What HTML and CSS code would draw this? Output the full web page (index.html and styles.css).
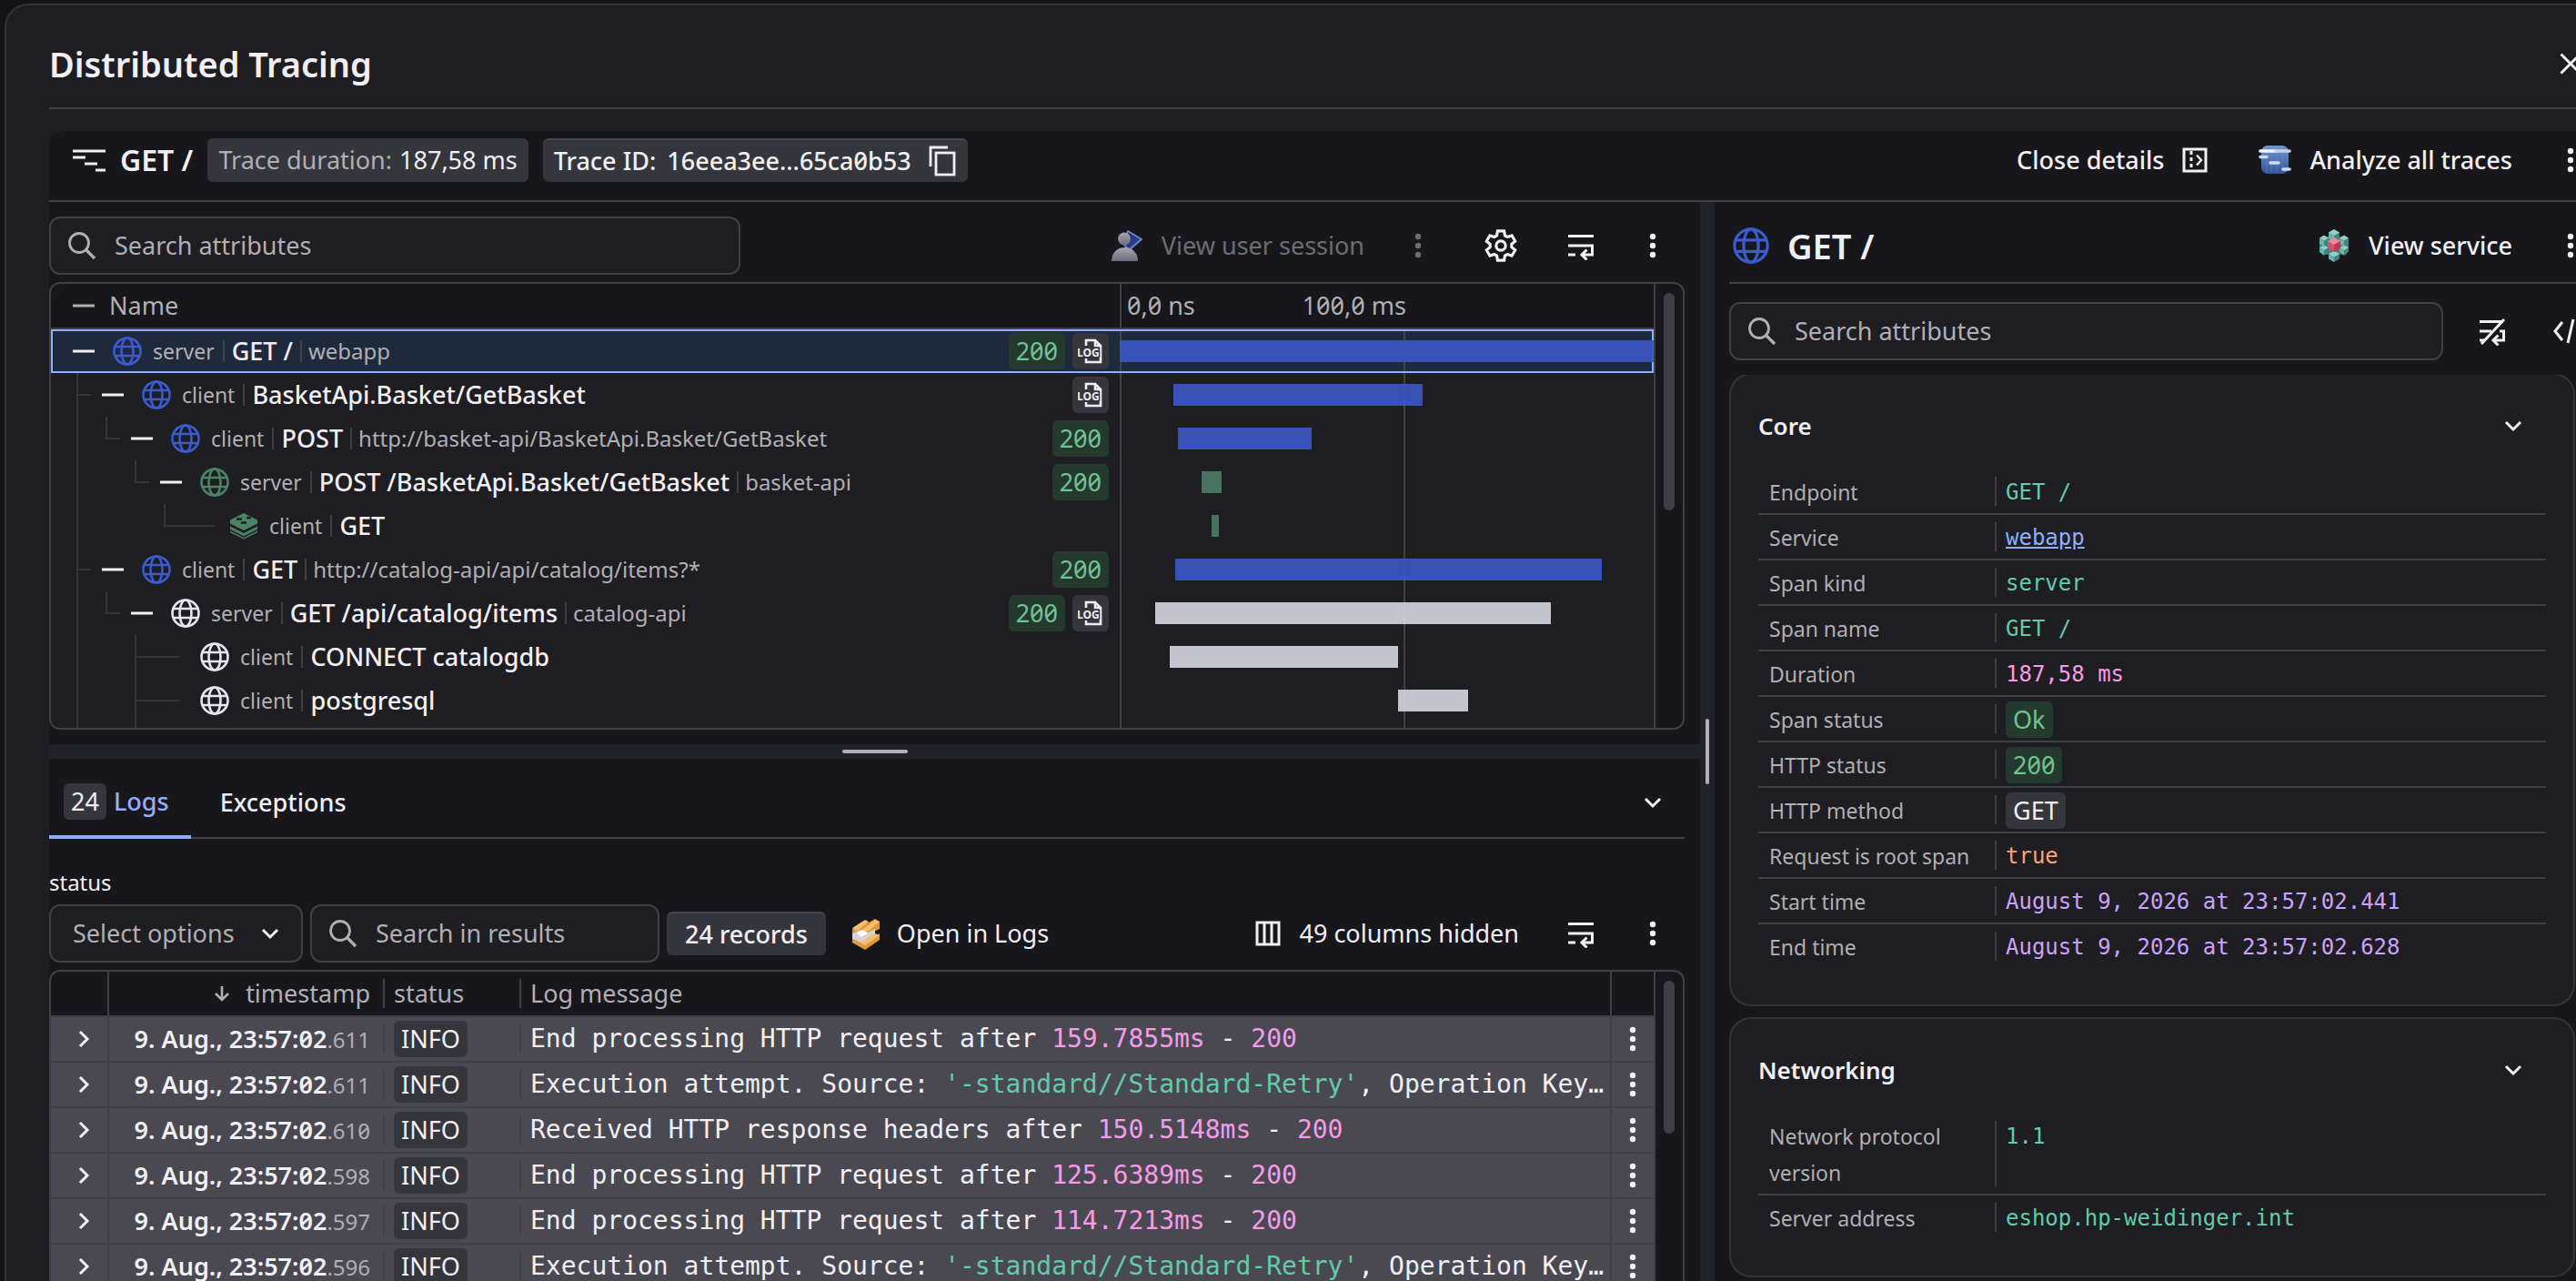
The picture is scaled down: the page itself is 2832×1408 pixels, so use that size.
FILE: index.html
```html
<!DOCTYPE html>
<html lang="en">
<head>
  <meta charset="UTF-8" />
  <meta name="viewport" content="width=device-width, initial-scale=1" />
  <title>Distributed Tracing</title>
  <link rel="stylesheet" href="styles.css">
</head>
<body>

  <!-- Icon sprite -->
  <svg class="sprite" aria-hidden="true">
    <symbol id="i-search" viewBox="0 0 32 32"><circle cx="13" cy="13" r="10.5" fill="none" stroke="currentColor" stroke-width="2.8"/><path d="M20.5 20.5L30 30" stroke="currentColor" stroke-width="3.2"/></symbol>
    <symbol id="i-kebab" viewBox="0 0 32 32"><circle cx="16" cy="6" r="3.2" fill="currentColor"/><circle cx="16" cy="16" r="3.2" fill="currentColor"/><circle cx="16" cy="26" r="3.2" fill="currentColor"/></symbol>
    <symbol id="i-globe" viewBox="0 0 32 32"><g fill="none" stroke="currentColor" stroke-width="2.6"><circle cx="16" cy="16" r="14.5"/><ellipse cx="16" cy="16" rx="6.5" ry="14.5"/><path d="M2.5 11h27M2.5 21h27"/></g></symbol>
    <symbol id="i-minus" viewBox="0 0 24 24"><path d="M0 12h24" stroke="currentColor" stroke-width="3"/></symbol>
    <symbol id="i-down" viewBox="0 0 20 20"><path d="M2 6l8 8 8-8" fill="none" stroke="currentColor" stroke-width="3"/></symbol>
    <symbol id="i-right" viewBox="0 0 20 20"><path d="M6 2l8 8-8 8" fill="none" stroke="currentColor" stroke-width="3"/></symbol>
    <symbol id="i-wrap" viewBox="0 0 32 32"><g fill="none" stroke="currentColor" stroke-width="3"><path d="M2 5.5h28M2 16h26.5v10H18M2 26h8"/><path d="M22.500 20.500L17 26l5.500 5.500"/></g></symbol>
    <symbol id="i-nowrap" viewBox="0 0 32 32"><g fill="none" stroke="currentColor" stroke-width="3"><path d="M2 5.500h26M2 16h13M24 16h4.500v10H18M2 26h5"/><path d="M22.500 20.500L17 26l5.500 5.500"/><path d="M29 3L4 30"/></g></symbol>
    <symbol id="i-code" viewBox="0 0 40 32"><path d="M11 6L3 16l8 10M23 3l-6 26M29 6l8 10-8 10" fill="none" stroke="currentColor" stroke-width="3"/></symbol>
    <symbol id="i-gear" viewBox="-16 -16 32 32"><g fill="none" stroke="currentColor" stroke-width="2.800"><path d="M-4-9.800L-3.200-14.300H3.200L4-9.800 6.490-8.360 10.780-9.920 13.980-4.380 10.490-1.440V1.440L13.980 4.380 10.780 9.920 6.490 8.360 4 9.800 3.200 14.300H-3.200L-4 9.800-6.490 8.360-10.780 9.920-13.980 4.380-10.490 1.440V-1.440L-13.980-4.380-10.780-9.920-6.490-8.360Z"/><circle r="4.600"/></g></symbol>
    <symbol id="i-log" viewBox="0 0 28 28"><path d="M9 8V2h10l6 6v18H9v-4M19 2v6h6" fill="none" stroke="currentColor" stroke-width="2.600"/><text x="-1" y="20" font-size="12" font-weight="700" fill="currentColor" stroke="#35363b" stroke-width="3" paint-order="stroke">LOG</text></symbol>
    <symbol id="i-redis" viewBox="0 0 32 28"><path d="M16 0l15 7.500v4L16 19 1 11.500v-4z" fill="currentColor"/><path d="M1 14.500L16 22l15-7.500v3.200L16 25.200 1 17.700z" fill="currentColor"/><path d="M1 19.600L16 27l15-7.400v1.700L16 28.500 1 21.300z" fill="currentColor"/><path d="M8 6.500h6M19 5h5M13 10.500h6" stroke="#1e1d22" stroke-width="2.400"/></symbol>
    <symbol id="i-copy" viewBox="0 0 32 36"><g fill="none" stroke="currentColor" stroke-width="2.800"><rect x="9" y="9" width="20" height="24"/><path d="M3 24V3h19"/></g></symbol>
    <symbol id="i-columns" viewBox="0 0 28 28"><path d="M2 2h24v24H2zM10 2v24M18 2v24" fill="none" stroke="currentColor" stroke-width="3"/></symbol>
    <symbol id="i-panel" viewBox="0 0 28 28"><g fill="none" stroke="currentColor"><path d="M2 2h24v24H2z" stroke-width="3"/><path d="M10 4v20" stroke-width="3" stroke-dasharray="4 3"/><path d="M16 8.500l5 5.500-5 5.500" stroke-width="2.400"/></g></symbol>
    <symbol id="i-trace" viewBox="0 0 36 26"><path d="M0 3h36M0 10h14M13 17h14M25 24h11" stroke="currentColor" stroke-width="3.200"/></symbol>
    <symbol id="i-close" viewBox="0 0 24 24"><path d="M1.500 1.500l21 21M22.500 1.500l-21 21" stroke="currentColor" stroke-width="3"/></symbol>
    <symbol id="i-sort" viewBox="0 0 20 20"><path d="M10 2v15M3 10l7 7 7-7" fill="none" stroke="currentColor" stroke-width="2.600"/></symbol>
    <linearGradient id="g-blue" x2="0" y2="1"><stop offset="0" stop-color="#6f97c9"/><stop offset="1" stop-color="#38539a"/></linearGradient>
    <linearGradient id="g-grey" x2="0" y2="1"><stop offset="0" stop-color="#a6a6ae"/><stop offset="1" stop-color="#6c6e80"/></linearGradient>
    <linearGradient id="g-diamond" x2="1" y2="1"><stop offset="0" stop-color="#141f66"/><stop offset="1" stop-color="#3a55a8"/></linearGradient>
  </svg>

  <main class="modal">
    <header class="modal-header">
      <h1>Distributed Tracing</h1>
      <button class="close" aria-label="Close"><svg><use href="#i-close"/></svg></button>
    </header>

    <section class="trace">
      <div class="trace-bar">
        <svg class="trace-icon"><use href="#i-trace"/></svg>
        <h2>GET /</h2>
        <div class="chip"><span class="muted">Trace duration:</span> 187,58 ms</div>
        <button class="chip chip-btn"><span>Trace ID:</span> <span>16eea3ee…65ca0b53</span><svg class="copy"><use href="#i-copy"/></svg></button>
        <div class="actions">
          <button class="action strong">Close details <svg class="i28"><use href="#i-panel"/></svg></button>
          <button class="action strong">
            <svg class="app" viewBox="0 0 36 36"><rect x="3" y="2" width="30" height="31" rx="7" fill="url(#g-blue)"/><path d="M9 3v29M14 3v29M20 3v29M26 3v29" stroke="#7fa3d2" stroke-opacity=".3"/><g stroke-linecap="round" stroke-width="3.600"><path d="M2 8h17" stroke="#f4f7fb"/><path d="M19 8h15" stroke="#c4d3e5"/><path d="M2 14.500h7M13 21h9M27 28h7" stroke="#c9dcf0"/></g></svg>
            Analyze all traces
          </button>
          <button class="icon-btn" aria-label="More trace actions"><svg><use href="#i-kebab"/></svg></button>
        </div>
      </div>

      <div class="panes">
        <div class="left">
          <section class="tree-pane">
            <div class="toolbar">
              <label class="search search-main"><svg><use href="#i-search"/></svg><input type="text" placeholder="Search attributes" aria-label="Search span attributes"></label>
              <div class="actions">
                <button class="action session" disabled>
                  <svg class="app" viewBox="0 0 36 36"><path d="M19 2l15 9-14 12-6-7z" fill="url(#g-diamond)" stroke="#6686c4" stroke-width="2" stroke-linejoin="round"/><circle cx="15" cy="10.500" r="7" fill="url(#g-grey)"/><path d="M1 35c0-9 6-15 14.500-15S30 26 30 35z" fill="url(#g-grey)"/></svg>
                  View user session
                </button>
                <button class="icon-btn menu spaced" disabled aria-label="Session actions"><svg><use href="#i-kebab"/></svg></button>
                <button class="icon-btn spaced" aria-label="Settings"><svg class="gear"><use href="#i-gear"/></svg></button>
                <button class="icon-btn" aria-label="Wrap lines"><svg><use href="#i-wrap"/></svg></button>
                <button class="icon-btn menu" aria-label="More span actions"><svg><use href="#i-kebab"/></svg></button>
              </div>
            </div>

            <div class="table-box tree-box">
              <div class="table-scroll">
              <table class="tree">
                <thead>
                  <tr>
                    <th class="name-col"><div class="cell"><button class="toggle" aria-label="Collapse all"><svg><use href="#i-minus"/></svg></button>Name</div></th>
                    <th class="time-col"><div class="ticks"><span>0,0 ns</span><span class="tick-mid">100,0 ms</span></div></th>
                  </tr>
                </thead>
                <tbody>
                  <tr class="selected">
                    <td><div class="cell"><button class="toggle" aria-label="Collapse"><svg><use href="#i-minus"/></svg></button><svg class="kind-icon blue"><use href="#i-globe"/></svg><span class="kind">server</span><span class="span-name">GET /</span><span class="service">webapp</span><span class="badges"><span class="badge ok">200</span><span class="badge log"><svg><use href="#i-log"/></svg></span></span></div></td>
                    <td class="time"><div class="bar bar-blue" style="margin-left:0;width:100%"></div></td>
                  </tr>
                  <tr>
                    <td><div class="cell"><i class="guide line tick"></i><button class="toggle" aria-label="Collapse"><svg><use href="#i-minus"/></svg></button><svg class="kind-icon blue"><use href="#i-globe"/></svg><span class="kind">client</span><span class="span-name">BasketApi.Basket/GetBasket</span><span class="badges"><span class="badge log"><svg><use href="#i-log"/></svg></span></span></div></td>
                    <td class="time"><div class="bar bar-blue" style="margin-left:10%;width:46.7%"></div></td>
                  </tr>
                  <tr>
                    <td><div class="cell"><i class="guide line"></i><i class="guide end"></i><button class="toggle" aria-label="Collapse"><svg><use href="#i-minus"/></svg></button><svg class="kind-icon blue"><use href="#i-globe"/></svg><span class="kind">client</span><span class="span-name">POST</span><span class="service">http://basket-api/BasketApi.Basket/GetBasket</span><span class="badges"><span class="badge ok">200</span></span></div></td>
                    <td class="time"><div class="bar bar-blue" style="margin-left:10.9%;width:25%"></div></td>
                  </tr>
                  <tr>
                    <td><div class="cell"><i class="guide line"></i><i class="guide"></i><i class="guide end"></i><button class="toggle" aria-label="Collapse"><svg><use href="#i-minus"/></svg></button><svg class="kind-icon green"><use href="#i-globe"/></svg><span class="kind">server</span><span class="span-name">POST /BasketApi.Basket/GetBasket</span><span class="service">basket-api</span><span class="badges"><span class="badge ok">200</span></span></div></td>
                    <td class="time"><div class="bar bar-green" style="margin-left:15.3%;width:3.7%"></div></td>
                  </tr>
                  <tr>
                    <td><div class="cell"><i class="guide line"></i><i class="guide"></i><i class="guide"></i><i class="guide end leaf"></i><svg class="kind-icon green"><use href="#i-redis"/></svg><span class="kind">client</span><span class="span-name">GET</span></div></td>
                    <td class="time"><div class="bar bar-green" style="margin-left:17.2%;width:1.3%"></div></td>
                  </tr>
                  <tr>
                    <td><div class="cell"><i class="guide line tick"></i><button class="toggle" aria-label="Collapse"><svg><use href="#i-minus"/></svg></button><svg class="kind-icon blue"><use href="#i-globe"/></svg><span class="kind">client</span><span class="span-name">GET</span><span class="service">http://catalog-api/api/catalog/items?*</span><span class="badges"><span class="badge ok">200</span></span></div></td>
                    <td class="time"><div class="bar bar-blue" style="margin-left:10.4%;width:79.9%"></div></td>
                  </tr>
                  <tr>
                    <td><div class="cell"><i class="guide line"></i><i class="guide end"></i><button class="toggle" aria-label="Collapse"><svg><use href="#i-minus"/></svg></button><svg class="kind-icon"><use href="#i-globe"/></svg><span class="kind">server</span><span class="span-name">GET /api/catalog/items</span><span class="service">catalog-api</span><span class="badges"><span class="badge ok">200</span><span class="badge log"><svg><use href="#i-log"/></svg></span></span></div></td>
                    <td class="time"><div class="bar bar-white" style="margin-left:6.7%;width:74.1%"></div></td>
                  </tr>
                  <tr>
                    <td><div class="cell"><i class="guide line"></i><i class="guide"></i><i class="guide line tick leaf"></i><svg class="kind-icon"><use href="#i-globe"/></svg><span class="kind">client</span><span class="span-name">CONNECT catalogdb</span></div></td>
                    <td class="time"><div class="bar bar-white" style="margin-left:9.3%;width:42.8%"></div></td>
                  </tr>
                  <tr>
                    <td><div class="cell"><i class="guide line"></i><i class="guide"></i><i class="guide line tick leaf"></i><svg class="kind-icon"><use href="#i-globe"/></svg><span class="kind">client</span><span class="span-name">postgresql</span></div></td>
                    <td class="time"><div class="bar bar-white" style="margin-left:52.2%;width:13.1%"></div></td>
                  </tr>
                  <tr>
                    <td><div class="cell"><i class="guide line"></i><i class="guide"></i><i class="guide line"></i></div></td>
                    <td class="time"></td>
                  </tr>
                </tbody>
              </table>
              </div>
              <div class="scrollbar"><div class="thumb thumb-tree"></div></div>
            </div>
          </section>

          <div class="splitter-h"><span></span></div>

          <section class="log-pane">
            <nav class="tabs">
              <button class="tab active"><span class="badge">24</span>Logs</button>
              <button class="tab">Exceptions</button>
              <button class="icon-btn menu collapse" aria-label="Collapse panel"><svg class="i20"><use href="#i-down"/></svg></button>
            </nav>

            <label class="filter-label" for="status">status</label>
            <div class="filters">
              <div class="select"><select id="status"><option>Select options</option></select><svg class="i20"><use href="#i-down"/></svg></div>
              <label class="search search-logs"><svg><use href="#i-search"/></svg><input type="text" placeholder="Search in results" aria-label="Search in results"></label>
              <button class="chip chip-btn records">24 records</button>
              <button class="action open-logs">
                <svg class="app" viewBox="0 0 36 36"><path d="M3 13L17 4l4 2 7-4 5 3v8L18 20l-8-1-7 1z" fill="#dd9a3e"/><path d="M3 12L17 3l4 2L8 15zM13 15L28 3l5 2-15 12z" fill="#f6bf6c"/><path d="M3 18l9-4 8 3 8-4v9l-15 7-10-5z" fill="#d5d3d1"/><path d="M8 18l6-4 6 4-7 4z" fill="#fff"/><path d="M3 24l12 5 18-11v7L17 36 3 28z" fill="#dd9a3e"/><path d="M3 23l9 5 16-10 5 2-16 11z" fill="#f6bf6c"/></svg>
                Open in Logs
              </button>
              <div class="actions">
                <button class="action"><svg class="i28"><use href="#i-columns"/></svg> 49 columns hidden</button>
                <button class="icon-btn" aria-label="Wrap log lines"><svg><use href="#i-wrap"/></svg></button>
                <button class="icon-btn menu" aria-label="More log actions"><svg><use href="#i-kebab"/></svg></button>
              </div>
            </div>

            <div class="table-box log-box">
              <div class="table-scroll">
              <table class="logs">
                <thead>
                  <tr><th class="c-expand"></th><th class="c-time"><svg class="i20"><use href="#i-sort"/></svg>timestamp</th><th class="c-status sep">status</th><th class="sep">Log message</th><th class="c-menu"></th></tr>
                </thead>
                <tbody>
                  <tr><td class="c-expand"><button aria-label="Expand"><svg class="i20"><use href="#i-right"/></svg></button></td><td class="c-time">9. Aug., 23:57:02<small>.611</small></td><td class="sep"><span class="badge">INFO</span></td><td class="msg sep">End processing HTTP request after <b>159.7855ms</b> - <b>200</b></td><td class="c-menu"><button aria-label="Row menu"><svg><use href="#i-kebab"/></svg></button></td></tr>
                  <tr><td class="c-expand"><button aria-label="Expand"><svg class="i20"><use href="#i-right"/></svg></button></td><td class="c-time">9. Aug., 23:57:02<small>.611</small></td><td class="sep"><span class="badge">INFO</span></td><td class="msg sep">Execution attempt. Source: <em>'-standard//Standard-Retry'</em>, Operation Key: <em>''</em></td><td class="c-menu"><button aria-label="Row menu"><svg><use href="#i-kebab"/></svg></button></td></tr>
                  <tr><td class="c-expand"><button aria-label="Expand"><svg class="i20"><use href="#i-right"/></svg></button></td><td class="c-time">9. Aug., 23:57:02<small>.610</small></td><td class="sep"><span class="badge">INFO</span></td><td class="msg sep">Received HTTP response headers after <b>150.5148ms</b> - <b>200</b></td><td class="c-menu"><button aria-label="Row menu"><svg><use href="#i-kebab"/></svg></button></td></tr>
                  <tr><td class="c-expand"><button aria-label="Expand"><svg class="i20"><use href="#i-right"/></svg></button></td><td class="c-time">9. Aug., 23:57:02<small>.598</small></td><td class="sep"><span class="badge">INFO</span></td><td class="msg sep">End processing HTTP request after <b>125.6389ms</b> - <b>200</b></td><td class="c-menu"><button aria-label="Row menu"><svg><use href="#i-kebab"/></svg></button></td></tr>
                  <tr><td class="c-expand"><button aria-label="Expand"><svg class="i20"><use href="#i-right"/></svg></button></td><td class="c-time">9. Aug., 23:57:02<small>.597</small></td><td class="sep"><span class="badge">INFO</span></td><td class="msg sep">End processing HTTP request after <b>114.7213ms</b> - <b>200</b></td><td class="c-menu"><button aria-label="Row menu"><svg><use href="#i-kebab"/></svg></button></td></tr>
                  <tr><td class="c-expand"><button aria-label="Expand"><svg class="i20"><use href="#i-right"/></svg></button></td><td class="c-time">9. Aug., 23:57:02<small>.596</small></td><td class="sep"><span class="badge">INFO</span></td><td class="msg sep">Execution attempt. Source: <em>'-standard//Standard-Retry'</em>, Operation Key: <em>''</em></td><td class="c-menu"><button aria-label="Row menu"><svg><use href="#i-kebab"/></svg></button></td></tr>
                </tbody>
              </table>
              </div>
              <div class="scrollbar"><div class="thumb thumb-logs"></div></div>
            </div>
          </section>
        </div>

        <div class="splitter-v"><span></span></div>

        <aside class="details">
          <div class="details-head">
            <svg class="big-globe"><use href="#i-globe"/></svg>
            <h1>GET /</h1>
            <div class="actions">
              <button class="action strong">
                <svg class="app" viewBox="0 0 36 36"><path d="M18 0l6 3.500v5l6-1 4 3v14l-4 4-6-1v5L18 36l-6-3.500v-5l-6 1-4-4v-14l4-3 6 1v-5z" fill="#3f8580"/><path d="M18 0l6 3.500-6 3.500-6-3.500zM7 6.500l5 3-5 3-5-3zM29 6.500l5 3-5 3-5-3zM7 17.500l5 2.500-5 3-5-3zM29 17.500l5 2.500-5 3-5-3zM18 24l6 3-6 3.500-6-3.500z" fill="#8fd1c8"/><path d="M2 10l5 3v6l-5-3zM2 20.500l5 3v5l-5-3.500zM12 4l6 3v6l-6-3zM24 10l5 3v6l-5-3zM24 20.500l5 3v5l-5-3.500zM12 27.500l6 3.500v5l-6-3.500z" fill="#69b3aa"/><path d="M18 9l7 4v8l-7 4-7-4v-8z" fill="#d2526c"/><path d="M18 9l7 4-7 4-7-4z" fill="#f08a9b"/><path d="M18 17l7-4v8l-7 4z" fill="#b93a57"/></svg>
                View service
              </button>
              <button class="icon-btn" aria-label="More service actions"><svg><use href="#i-kebab"/></svg></button>
            </div>
          </div>

          <div class="details-search">
            <label class="search"><svg><use href="#i-search"/></svg><input type="text" placeholder="Search attributes" aria-label="Search attributes"></label>
            <button class="icon-btn" aria-label="Disable line wrap"><svg><use href="#i-nowrap"/></svg></button>
            <button class="icon-btn" aria-label="Show raw"><svg class="code"><use href="#i-code"/></svg></button>
          </div>

          <div class="cards">
            <section class="card">
              <div class="card-head"><h3>Core</h3><button class="icon-btn card-toggle" aria-label="Collapse Core"><svg class="i20"><use href="#i-down"/></svg></button></div>
              <table class="props">
                <tr><th>Endpoint</th><td class="str">GET /</td></tr>
                <tr><th>Service</th><td><a href="#">webapp</a></td></tr>
                <tr><th>Span kind</th><td class="str">server</td></tr>
                <tr><th>Span name</th><td class="str">GET /</td></tr>
                <tr><th>Duration</th><td class="num">187,58 ms</td></tr>
                <tr><th>Span status</th><td><span class="badge ok">Ok</span></td></tr>
                <tr><th>HTTP status</th><td><span class="badge ok">200</span></td></tr>
                <tr><th>HTTP method</th><td><span class="badge">GET</span></td></tr>
                <tr><th>Request is root span</th><td class="bool">true</td></tr>
                <tr><th>Start time</th><td class="date">August 9, 2026 at 23:57:02.441</td></tr>
                <tr><th>End time</th><td class="date">August 9, 2026 at 23:57:02.628</td></tr>
              </table>
            </section>
            <section class="card">
              <div class="card-head"><h3>Networking</h3><button class="icon-btn card-toggle" aria-label="Collapse Networking"><svg class="i20"><use href="#i-down"/></svg></button></div>
              <table class="props">
                <tr><th>Network protocol version</th><td class="str">1.1</td></tr>
                <tr><th>Server address</th><td class="str">eshop.hp-weidinger.int</td></tr>
              </table>
            </section>
          </div>
        </aside>
      </div>
    </section>
  </main>

</body>
</html>
```
FILE: styles.css
```css
* { box-sizing: border-box; }
:root {
  --bg: #17161b;
  --surface: #1e1d22;
  --line: #403f46;
  --line-soft: #333238;
  --chip: #35363b;
  --text: #f0eff4;
  --muted: #b0afb5;
  --accent: #8faeff;
  --mono: "DejaVu Sans Mono", monospace;
}
body { margin: 0; height: 100vh; overflow: hidden; background: #131217; color: var(--text); font: 400 27px/40px "Noto Sans", sans-serif; font-variant-numeric: slashed-zero; }
h1, h2, h3 { margin: 0; font-weight: 600; }
h1 { font-size: 38px; line-height: 48px; }
h2 { font-size: 32px; }
h3 { font-size: 26px; }
button, input, select { font: inherit; font-variant-numeric: inherit; color: inherit; background: none; border: 0; padding: 0; margin: 0; }
button { cursor: pointer; }
svg { display: block; flex: none; }
.sprite { position: absolute; width: 0; height: 0; }
.i28 { width: 28px; height: 28px; }
.i20 { width: 20px; height: 20px; }
.muted { color: var(--muted); }

/* Modal: wider than the window, its right edge runs out of view */
.modal { display: flex; flex-direction: column; width: calc(100% + 71px); height: calc(100vh + 32px); margin: 4px 0 0 5px; padding: 0 48px 32px 47px; background: var(--surface); border: 2px solid var(--line-soft); border-radius: 26px; }
.modal-header { flex: none; display: flex; align-items: center; justify-content: space-between; height: 114px; padding: 16px 20px 0 0; border-bottom: 2px solid var(--line); }
.close svg { width: 24px; height: 24px; }

.trace { flex: 1; min-height: 0; display: flex; flex-direction: column; margin-top: 24px; background: var(--bg); border-radius: 16px 0 0 0; }
.trace-bar { flex: none; display: flex; align-items: center; gap: 16px; height: 78px; padding: 0 0 12px 26px; border-bottom: 2px solid var(--line); }
.trace-icon { width: 36px; height: 26px; }
.chip { display: flex; align-items: center; gap: 8px; height: 48px; padding: 0 12px; background: var(--chip); border-radius: 6px; white-space: nowrap; }
.chip-btn { gap: 12px; font-weight: 500; border-top: 2px solid #45464c; }
.copy { width: 32px; height: 36px; margin-left: 6px; }
.actions { display: flex; align-items: center; margin-left: auto; gap: 8px; }
.action { display: flex; align-items: center; gap: 20px; height: 64px; padding: 0 24px; white-space: nowrap; }
.action.strong { font-weight: 500; }
.action:disabled { color: #6d6c73; }
.action.session { padding-right: 12px; }
.app { width: 36px; height: 36px; }
.icon-btn { flex: none; display: flex; align-items: center; justify-content: center; width: 64px; height: 64px; }
.icon-btn:disabled { color: #6d6c73; }
.icon-btn svg { width: 32px; height: 32px; }
.icon-btn .i20 { width: 20px; height: 20px; }
.icon-btn .gear { width: 36px; height: 36px; }
.icon-btn .code { width: 40px; height: 32px; }
.menu { width: 70px; }
.spaced { margin-right: 12px; }

.panes { flex: 1; min-height: 0; display: grid; grid-template-columns: minmax(0, 1815fr) 16px minmax(0, 973fr); }
.left { min-height: 0; display: grid; grid-template-rows: minmax(0, 119fr) 16px minmax(0, 115fr); }
.left .actions { gap: 12px; }
.tree-pane { display: flex; flex-direction: column; min-height: 0; padding: 16px 17px 16px 0; }
.toolbar { flex: none; display: flex; align-items: center; margin-bottom: 8px; }

.search, .select { display: flex; align-items: center; height: 64px; background: var(--surface); border: 2px solid var(--line); border-radius: 12px; }
.search { gap: 20px; padding: 0 18px; color: var(--muted); }
.search svg { width: 32px; height: 32px; }
.search input { flex: 1; min-width: 0; outline: 0; }
.search input::placeholder { color: var(--muted); opacity: 1; }
.search-main { width: 760px; }
.search-logs { width: 384px; }

.splitter-h, .splitter-v { display: flex; align-items: center; justify-content: center; background: #202126; }
.splitter-h span { width: 72px; height: 4px; background: var(--muted); border-radius: 2px; }
.splitter-v { padding-top: 20px; }
.splitter-v span { width: 4px; height: 72px; background: var(--muted); border-radius: 2px; }

/* Shared table frame */
.table-box { display: flex; min-height: 0; flex: 1; overflow: hidden; border: 2px solid var(--line); border-radius: 12px; }
.table-scroll { flex: 1; min-width: 0; overflow: hidden; border-right: 2px solid var(--line); }
.scrollbar { width: 30px; padding: 10px 9px; }
.thumb { width: 12px; background: var(--line); border-radius: 6px; }
.thumb-tree { height: 239px; }
.thumb-logs { height: 168px; }
table { width: 100%; border-collapse: separate; border-spacing: 0; table-layout: fixed; }
th, td { padding: 0; font-weight: 400; text-align: left; }

.badge { display: inline-flex; align-items: center; justify-content: center; height: 40px; padding: 0 8px; background: var(--chip); border-radius: 6px; color: var(--text); font: 400 27px/40px "Noto Sans", sans-serif; font-variant-numeric: slashed-zero; }
.badge.ok { background: #253a2e; color: #6fc394; }
.badge.log { width: 40px; padding: 0; }
.badge.log svg { width: 28px; height: 28px; overflow: visible; }

/* Span tree */
.tree th { height: 50px; border-bottom: 2px solid var(--line); color: var(--muted); }
.tree td { height: 48px; }
.tree tbody { background: var(--surface); }
.time-col { width: 587px; }
.cell { display: flex; align-items: center; height: 48px; padding: 0 12px 0 24px; white-space: nowrap; }
.toggle { width: 44px; height: 40px; }
.toggle svg { width: 24px; height: 24px; }
th .toggle { width: 40px; }
.kind-icon { width: 32px; height: 32px; color: #e5e4f0; }
.kind-icon.blue { color: #3a5bd0; }
.kind-icon.green { color: #4a8365; }
.kind { margin-left: 12px; font-size: 23px; color: var(--muted); }
.span-name { margin-left: 9px; padding-left: 10px; font-weight: 500; background: linear-gradient(var(--line), var(--line)) left center / 2px 24px no-repeat; }
.service { margin-left: 8px; padding-left: 9px; font-size: 24px; color: var(--muted); background: linear-gradient(var(--line), var(--line)) left center / 2px 24px no-repeat; }
.badges { display: flex; gap: 8px; margin-left: auto; }
.guide { flex: none; width: 32px; height: 48px; --g: linear-gradient(var(--line-soft), var(--line-soft)); background-repeat: no-repeat; }
.guide.line { background-image: var(--g); background-position: 4px 0; background-size: 2px 48px; }
.guide.tick { background-image: var(--g), var(--g); background-position: 4px 0, 4px 23px; background-size: 2px 48px, 16px 2px; }
.guide.end { background-image: var(--g), var(--g); background-position: 4px 0, 4px 23px; background-size: 2px 24px, 16px 2px; }
.guide.leaf { width: 76px; background-size: 2px 48px, 50px 2px; }
.guide.end.leaf { background-size: 2px 24px, 56px 2px; }
.time-col { background: linear-gradient(var(--line), var(--line)) left top / 2px 100% no-repeat; }
.time { background: linear-gradient(var(--line), var(--line)) left top / 2px 100% no-repeat, linear-gradient(var(--line), var(--line)) 53.3% 0 / 2px 100% no-repeat; }
.bar { height: 24px; opacity: .92; }
.bar-blue { background: #3956c4; }
.bar-green { background: #4a7c62; }
.bar-white { background: #d3d2de; }
.selected { background: #1f293c; outline: 2px solid var(--accent); outline-offset: -2px; }
.ticks { display: flex; height: 48px; align-items: center; padding-left: 8px; }
.tick-mid { margin-left: auto; margin-right: 47%; }

/* Logs */
.log-pane { display: flex; flex-direction: column; min-height: 0; padding-right: 17px; }
.tabs { flex: none; display: flex; height: 88px; border-bottom: 2px solid var(--line); }
.tab { display: flex; align-items: center; gap: 8px; height: 88px; padding: 8px 32px 0; font-weight: 500; }
.tab.active { padding: 10px 24px 0 16px; color: var(--accent); border-bottom: 4px solid var(--accent); }
.tabs .collapse { margin: 16px 0 0 auto; }
.filter-label { flex: none; margin: 32px 0 8px; font-size: 24px; line-height: 32px; }
.filters { flex: none; display: flex; align-items: center; gap: 8px; margin-bottom: 8px; }
.select { width: 279px; padding: 0 24px 0 20px; color: var(--muted); }
.select select { flex: 1; min-width: 0; appearance: none; padding: 0 4px; outline: 0; }
.select svg { color: var(--text); pointer-events: none; }
.records { padding: 0 20px; }
.open-logs { gap: 16px; padding: 0 18px; }
.log-box { flex: none; border-radius: 12px 12px 0 0; border-bottom: 0; }
.logs th { height: 50px; color: var(--muted); border-bottom: 2px solid var(--line); }
.logs tbody { background: #4a4951; }
.logs td { height: 50px; border-bottom: 2px solid var(--line); }
.logs .c-expand { width: 64px; border-right: 2px solid var(--line); }
.logs .c-menu { width: 48px; border-left: 2px solid var(--line); }
.logs .c-time { width: 301px; padding-right: 14px; text-align: right; font-weight: 600; }
.logs th.c-time { font-weight: 400; }
.c-time svg { display: inline-block; margin-right: 16px; }
.c-time small { font-size: 24px; font-weight: 400; color: var(--muted); }
.logs .c-status { width: 150px; }
.logs .sep { padding-left: 12px; background: linear-gradient(var(--line), var(--line)) left center / 2px 32px no-repeat; }
.logs .msg { font: 28px/40px var(--mono); white-space: nowrap; overflow: hidden; text-overflow: ellipsis; }
.msg b { font-weight: 400; color: #f59be8; }
.msg em { font-style: normal; color: #62cbaa; }
.logs button { display: flex; align-items: center; justify-content: center; width: 100%; height: 40px; }
.logs .c-expand button { padding-left: 10px; }
.c-menu svg { width: 32px; height: 32px; }
.logs td .badge { vertical-align: top; }

/* Details panel */
.details { display: flex; flex-direction: column; min-height: 0; padding-left: 16px; }
.details-head { flex: none; display: flex; align-items: center; height: 90px; padding: 8px 0 0 4px; border-bottom: 2px solid var(--line); }
.big-globe { width: 40px; height: 40px; margin-right: 20px; color: #3a5bd0; }
.details-search { flex: none; display: flex; align-items: center; gap: 22px; margin: 20px 0 16px; }
.details-search .search { flex: 1; }
.cards { flex: 1; min-height: 0; overflow: hidden; padding-right: 27px; }
.card { margin-bottom: 12px; padding: 24px 30px 40px; background: var(--surface); border: 2px solid var(--line-soft); border-radius: 24px; }
.card:first-child { margin-top: -2px; }
.card-head { display: flex; align-items: center; justify-content: space-between; height: 64px; margin-bottom: 16px; }
.card-toggle { width: 72px; }
.props th { width: 260px; padding: 5px 24px 3px 12px; font-size: 23px; line-height: 40px; color: var(--muted); vertical-align: top; }
.props td { padding: 5px 12px 3px; font: 24px/40px var(--mono); vertical-align: top; background: linear-gradient(var(--line), var(--line)) left center / 2px calc(100% - 16px) no-repeat; }
.props tr:not(:last-child) > * { border-bottom: 2px solid var(--line); }
.props .badge { vertical-align: top; }
.props a { color: var(--accent); }
.str { color: #62cbaa; }
.num { color: #f59be8; }
.bool { color: #f3a57f; }
.date { color: #cba2ff; }
```
